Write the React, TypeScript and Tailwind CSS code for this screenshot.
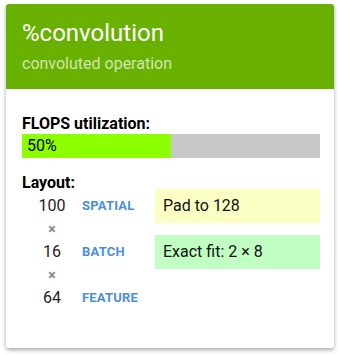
const dims = [
  { size: 100, name: 'SPATIAL', note: 'Pad to 128', tone: 'bg-[#fbffc4]' },
  { size: 16, name: 'BATCH', note: 'Exact fit: 2 × 8', tone: 'bg-[#c2ffc2]' },
  { size: 64, name: 'FEATURE', note: null, tone: '' },
]

export default function App() {
  return (
    <div className="min-h-[355px] w-[340px] bg-white px-[6px] pt-[4px] font-['Roboto',sans-serif]">
      <div className="h-[344px] overflow-hidden rounded-[3px] bg-white shadow-[0_2px_4px_rgba(0,0,0,0.35)]">
        <div className="h-[85px] bg-[#69b100] px-4 pt-[14px]">
          <div className="text-[24px] leading-[30px] text-white">%convolution</div>
          <div className="mt-[6px] text-[16px] leading-[20px] text-white/70">convoluted operation</div>
        </div>

        <div className="px-4 pt-[25px]">
          <div className="text-[16px] font-bold leading-[20px] text-black">FLOPS utilization:</div>
          <div className="flex h-[24px] w-[298px] bg-[#c8c8c8]">
            <div className="flex w-1/2 items-center bg-[#8cff00] pl-[5px] text-[16px] text-black">50%</div>
          </div>

          <div className="mt-[17px] text-[16px] font-bold leading-[16px] text-black">Layout:</div>
          <div className="-mt-[2px] grid grid-cols-[60px_73px_165px]">
            {dims.map((d, i) => (
              <div key={d.name} className="contents">
                {i > 0 ? (
                  <>
                    <div className="flex h-[12px] items-center justify-center text-[14px] font-bold leading-none text-[#888]">
                      ×
                    </div>
                    <div />
                    <div />
                  </>
                ) : null}
                <div className="flex h-[34px] items-center justify-center text-[16px] text-[#222]">{d.size}</div>
                <div className="flex h-[34px] items-center text-[13px] font-bold tracking-[0.2px] text-[#4a8fdb]">
                  {d.name}
                </div>
                {d.note ? (
                  <div className={`flex h-[34px] items-center px-[8px] text-[16px] text-[#111] ${d.tone}`}>
                    {d.note}
                  </div>
                ) : (
                  <div />
                )}
              </div>
            ))}
          </div>
        </div>
      </div>
    </div>
  )
}
